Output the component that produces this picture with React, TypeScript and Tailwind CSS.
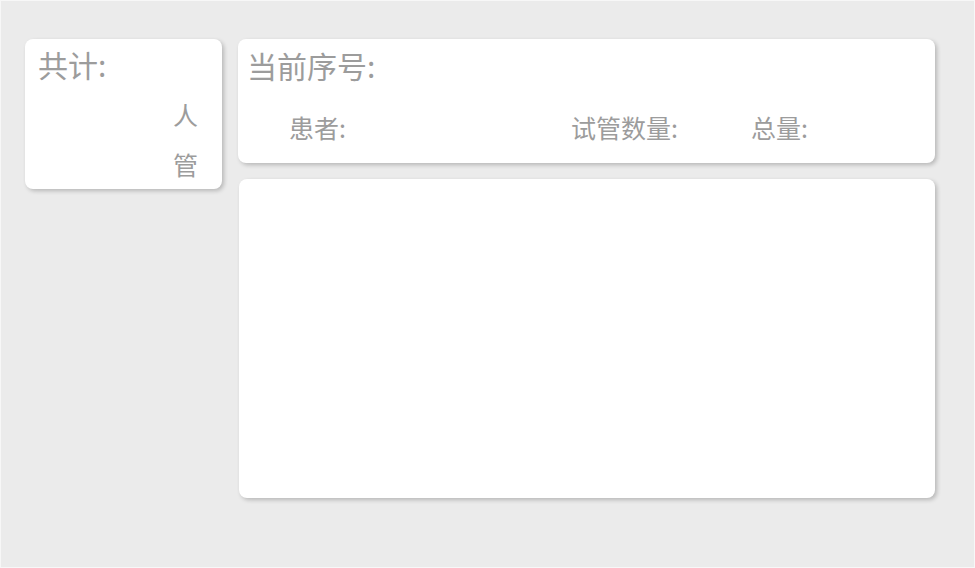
export default function App() {
  return (
    <div className="h-[568px] w-[975px] overflow-hidden border border-[#f7f7f7] bg-[#ebebeb] font-['Noto_Sans_CJK_SC','Noto_Sans',sans-serif] text-[#9c9c9c]">
      <div className="flex gap-[16px] pl-[24px] pt-[38px]">
        {/* left summary card */}
        <div className="flex h-[150px] w-[197px] flex-col rounded-lg bg-white shadow-[2px_2px_4px_rgba(0,0,0,0.22)]">
          <div className="flex h-[50px] items-center pl-[13px] text-[30px] leading-none">共计:</div>
          <div className="flex h-[50px] items-center justify-end pr-[24px] text-[25px] leading-none">人</div>
          <div className="flex h-[50px] items-center justify-end pr-[24px] text-[25px] leading-none">管</div>
        </div>

        <div className="flex w-[697px] flex-col gap-[16px]">
          {/* current number card */}
          <div className="flex h-[124px] flex-col rounded-lg bg-white shadow-[2px_2px_4px_rgba(0,0,0,0.22)]">
            <div className="flex h-[52px] items-center pl-[9px] text-[30px] leading-none">当前序号:</div>
            <div className="flex h-[72px] items-center pl-[51px] text-[25px] leading-none">
              <span className="w-[282px]">患者:</span>
              <span className="w-[180px]">试管数量:</span>
              <span>总量:</span>
            </div>
          </div>

          {/* list area */}
          <div className="ml-px h-[319px] rounded-lg bg-white shadow-[2px_2px_4px_rgba(0,0,0,0.22)]" />
        </div>
      </div>
    </div>
  )
}
